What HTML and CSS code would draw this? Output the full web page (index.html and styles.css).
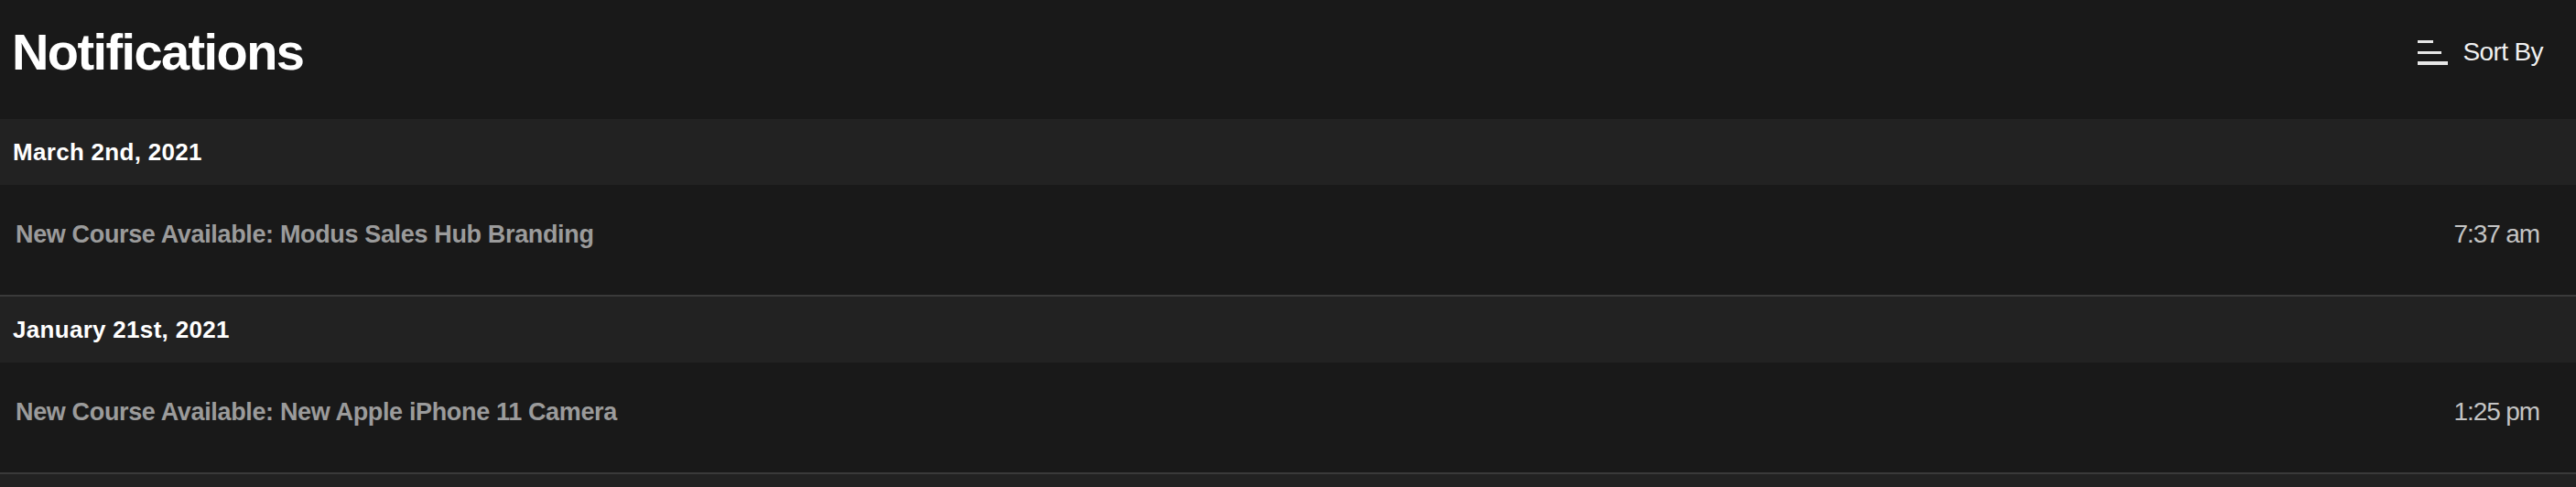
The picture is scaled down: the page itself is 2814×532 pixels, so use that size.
FILE: index.html
```html
<!DOCTYPE html>
<html lang="en">
<head>
<meta charset="utf-8">
<title>Notifications</title>
<link rel="stylesheet" href="styles.css">
</head>
<body>
<div class="page">
  <header class="top">
    <h1 class="title">Notifications</h1>
    <button class="sort" type="button">
      <svg class="sort-icon" width="33" height="27" viewBox="0 0 33 27" aria-hidden="true">
        <rect x="0" y="0" width="17" height="3" fill="#e6e6e6"/>
        <rect x="0" y="12" width="26" height="3" fill="#e6e6e6"/>
        <rect x="0" y="23" width="33" height="4" fill="#e6e6e6"/>
      </svg>
      <span class="sort-label">Sort By</span>
    </button>
  </header>

  <section class="group">
    <div class="date-band">March 2nd, 2021</div>
    <div class="item">
      <span class="item-text">New Course Available: Modus Sales Hub Branding</span>
      <span class="item-time">7:37 am</span>
    </div>
  </section>

  <section class="group">
    <div class="date-band">January 21st, 2021</div>
    <div class="item">
      <span class="item-text">New Course Available: New Apple iPhone 11 Camera</span>
      <span class="item-time">1:25 pm</span>
    </div>
  </section>

  <section class="group">
    <div class="date-band"></div>
  </section>
</div>
</body>
</html>
```

FILE: styles.css
```css
html, body {
  margin: 0;
  padding: 0;
  background: #191919;
}

body {
  font-family: "Liberation Sans", Arial, sans-serif;
  color: #ffffff;
}

.page {
  display: flex;
  flex-direction: column;
}

.top {
  box-sizing: border-box;
  height: 130px;
  display: flex;
  align-items: flex-start;
  justify-content: space-between;
  padding: 25px 36px 0 13px;
  background: #191919;
}

.title {
  margin: 0;
  font-size: 56px;
  line-height: 64px;
  font-weight: 700;
  letter-spacing: -1.6px;
  color: #ffffff;
}

.sort {
  display: flex;
  align-items: center;
  gap: 16px;
  height: 64px;
  margin: 0;
  padding: 0;
  border: 0;
  background: transparent;
  cursor: pointer;
  font-family: inherit;
}

.sort-icon {
  display: block;
}

.sort-label {
  font-size: 28px;
  line-height: 32px;
  font-weight: 400;
  letter-spacing: -0.6px;
  color: #f0f0f0;
}

.group {
  display: flex;
  flex-direction: column;
}

.date-band {
  box-sizing: border-box;
  height: 72px;
  display: flex;
  align-items: center;
  padding: 0 14px;
  background: #222222;
  font-size: 26px;
  font-weight: 700;
  letter-spacing: 0.3px;
  color: #ffffff;
}

.item {
  box-sizing: border-box;
  height: 122px;
  display: flex;
  align-items: flex-start;
  justify-content: space-between;
  padding: 38px 40px 0 17px;
  background: #191919;
  border-bottom: 2px solid #3a3a3a;
}

.item-text {
  font-size: 27px;
  line-height: 32px;
  font-weight: 700;
  letter-spacing: -0.35px;
  color: #9b9b9b;
}

.item-time {
  font-size: 28px;
  line-height: 32px;
  font-weight: 400;
  letter-spacing: -1.1px;
  color: #c4c4c4;
}
```
